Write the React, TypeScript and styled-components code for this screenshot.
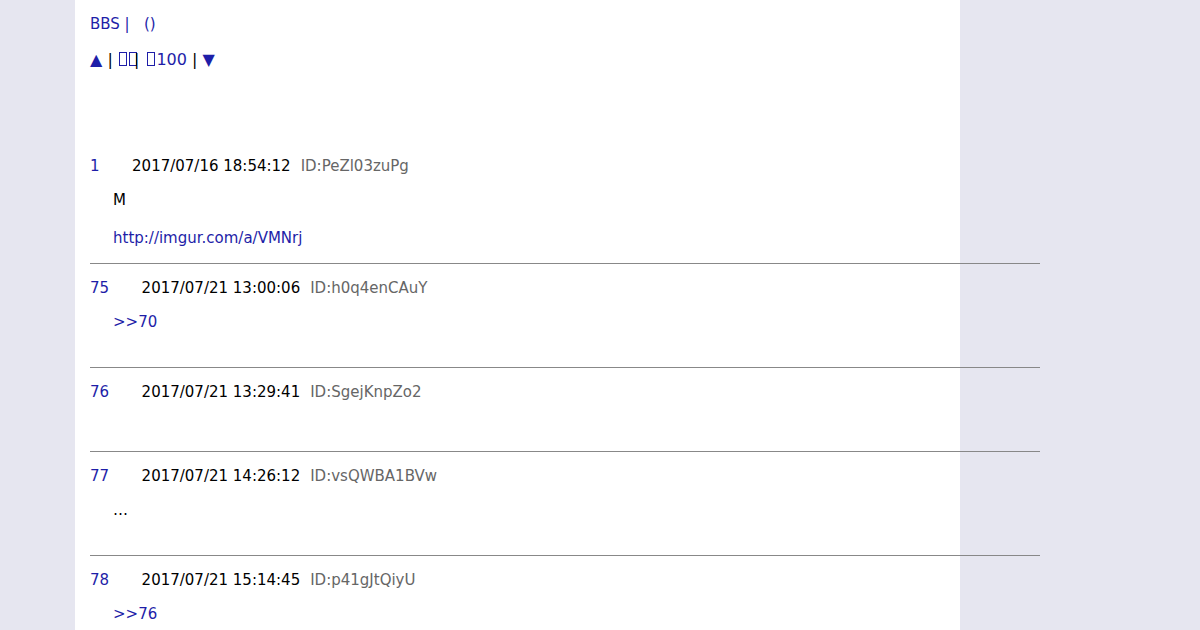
import React from 'react';
import styled, { createGlobalStyle } from 'styled-components';

const GlobalStyle = createGlobalStyle`
  body {
    margin: 0;
    background: #e6e6f0;
    font-family: 'DejaVu Sans', sans-serif;
    font-size: 15px;
    color: #000;
  }
`

const Page = styled.div`
  margin-left: 75px;
  width: 885px;
  min-height: 630px;
  background: #ffffff;
  padding: 0 15px;
  box-sizing: border-box;
`

const NavLine = styled.div<{ $top: number; $size?: number }>`
  padding-top: ${(p) => p.$top}px;
  font-size: ${(p) => p.$size || 15}px;
  line-height: 20px;
  white-space: pre;
`

const Blue = styled.span`
  color: #1e1ea8;
`

const Tofu = styled.span<{ $left?: number }>`
  display: inline-block;
  width: 6px;
  height: 12px;
  border: 1px solid currentColor;
  margin: 0 1px 0 ${(p) => (p.$left === undefined ? 1 : p.$left)}px;
  vertical-align: -1px;
`

const Sep = styled.span<{ $shift?: number }>`
  color: #000;
  margin-left: ${(p) => p.$shift || 0}px;
`

const Arrow = styled.span<{ $shift?: number }>`
  color: #1e1ea8;
  margin-left: ${(p) => p.$shift || 0}px;
`

const PostList = styled.div`
  margin-top: 72px;
`

const Post = styled.div<{ $bottom: number }>`
  width: 950px;
  padding-top: 14px;
  padding-bottom: ${(p) => p.$bottom}px;
  border-bottom: 1px solid #888;
`

const PostHead = styled.div`
  line-height: 20px;
  white-space: nowrap;
`

const PostNo = styled.span`
  color: #1e1ea8;
  margin-right: 32.5px;
`

const PostId = styled.span`
  color: #666;
  margin-left: 10px;
`

const PostBody = styled.div`
  margin-top: 15px;
  padding-left: 23px;
  line-height: 19px;
`

const Link = styled.a`
  color: #1e1ea8;
  text-decoration: none;
`

type PostData = {
  no: number;
  date: string;
  id: string;
  body: React.ReactNode;
  bottom: number;
};

const posts: PostData[] = [
  {
    no: 1,
    date: '2017/07/16 18:54:12',
    id: 'ID:PeZl03zuPg',
    body: (
      <>
        M<br /><br />
        <Link href="#">http://imgur.com/a/VMNrj</Link>
      </>
    ),
    bottom: 15,
  },
  { no: 75, date: '2017/07/21 13:00:06', id: 'ID:h0q4enCAuY', body: <Link href="#">&gt;&gt;70</Link>, bottom: 35 },
  { no: 76, date: '2017/07/21 13:29:41', id: 'ID:SgejKnpZo2', body: null, bottom: 34 },
  { no: 77, date: '2017/07/21 14:26:12', id: 'ID:vsQWBA1BVw', body: '…', bottom: 35 },
  { no: 78, date: '2017/07/21 15:14:45', id: 'ID:p41gJtQiyU', body: <Link href="#">&gt;&gt;76</Link>, bottom: 35 },
];

const App = () => {
  return (
    <>
      <GlobalStyle />
      <Page>
        <NavLine $top={14}>
          <Blue>BBS |   ()</Blue>
        </NavLine>
        <NavLine $top={16} $size={16}>
          <Arrow>▲</Arrow><Sep> |</Sep>{' '}
          <Blue><Tofu $left={1} /><Tofu /></Blue><Sep $shift={-4}>|</Sep>{' '}
          <Blue><Tofu $left={3} />100</Blue><Sep> | </Sep>
          <Arrow>▼</Arrow>
        </NavLine>
        <PostList>
          {posts.map((p) => (
            <Post key={p.no} $bottom={p.bottom}>
              <PostHead>
                <PostNo>{p.no}</PostNo>
                {p.date}
                <PostId>{p.id}</PostId>
              </PostHead>
              <PostBody>{p.body}</PostBody>
            </Post>
          ))}
        </PostList>
      </Page>
    </>
  );
};

export default App;
